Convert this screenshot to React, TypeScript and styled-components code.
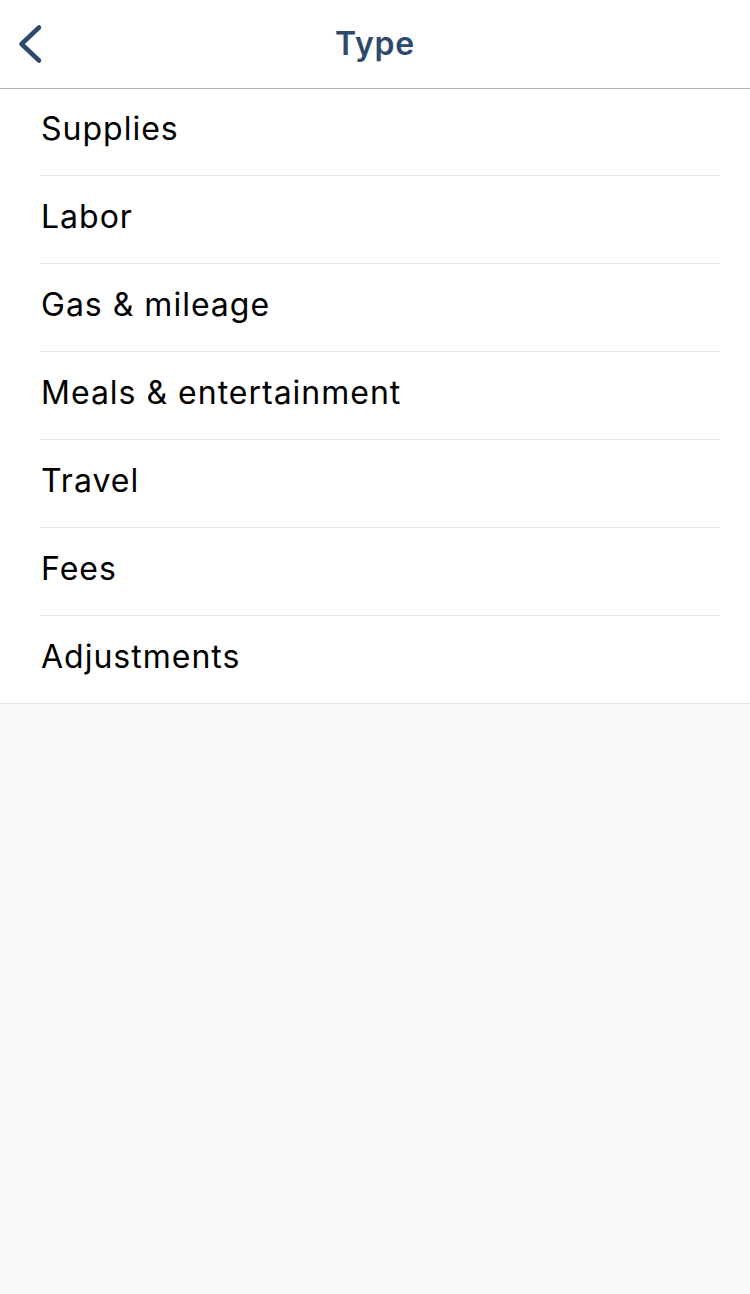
import React from "react";
import styled, { createGlobalStyle } from "styled-components";

const Global = createGlobalStyle`
  html, body { margin: 0; padding: 0; background: #f8f8f8; }
  body { font-family: "Inter", "Roboto", "Liberation Sans", sans-serif; }
  * { box-sizing: border-box; }
`;

const Page = styled.div`
  width: 750px;
  min-height: 1294px;
  background: #f8f8f8;
`;

const Header = styled.header`
  height: 89px;
  background: #ffffff;
  border-bottom: 1px solid #b2b2b2;
  display: grid;
  grid-template-columns: 80px 1fr 80px;
  align-items: center;
`;

const BackButton = styled.button`
  background: none;
  border: none;
  padding: 0;
  width: 60px;
  height: 88px;
  display: block;
  cursor: pointer;
`;

const Title = styled.h1`
  margin: 0 0 2px;
  text-align: center;
  font-size: 32px;
  font-weight: 600;
  color: #2d4a6d;
  letter-spacing: 0.8px;
`;

const List = styled.ul`
  list-style: none;
  margin: 0;
  padding: 0 0 0 40px;
  background: #ffffff;
  border-bottom: 1px solid #dde3e6;
`;

const Row = styled.li<{ $first?: boolean; $last?: boolean }>`
  height: ${(p) => (p.$first ? "87px" : p.$last ? "87px" : "88px")};
  display: flex;
  align-items: center;
  padding: 0 0 7px 1px;
  margin-right: 30px;
  font-size: 32px;
  letter-spacing: 1px;
  color: #000000;
  border-bottom: ${(p) => (p.$last ? "none" : "1px solid #e4e8ea")};
`;

const items = [
  "Supplies",
  "Labor",
  "Gas & mileage",
  "Meals & entertainment",
  "Travel",
  "Fees",
  "Adjustments",
];

export default function App() {
  return (
    <Page>
      <Global />
      <Header>
        <BackButton aria-label="Back">
          <svg width="60" height="88" viewBox="0 0 60 88">
            <path
              d="M39 27.5 L21.5 44 L39 60.5"
              fill="none"
              stroke="#2d4a6d"
              strokeWidth="4.5"
              strokeLinecap="round"
              strokeLinejoin="round"
            />
          </svg>
        </BackButton>
        <Title>Type</Title>
        <div />
      </Header>
      <List>
        {items.map((t, i) => (
          <Row key={t} $first={i === 0} $last={i === items.length - 1}>
            {t}
          </Row>
        ))}
      </List>
    </Page>
  );
}
